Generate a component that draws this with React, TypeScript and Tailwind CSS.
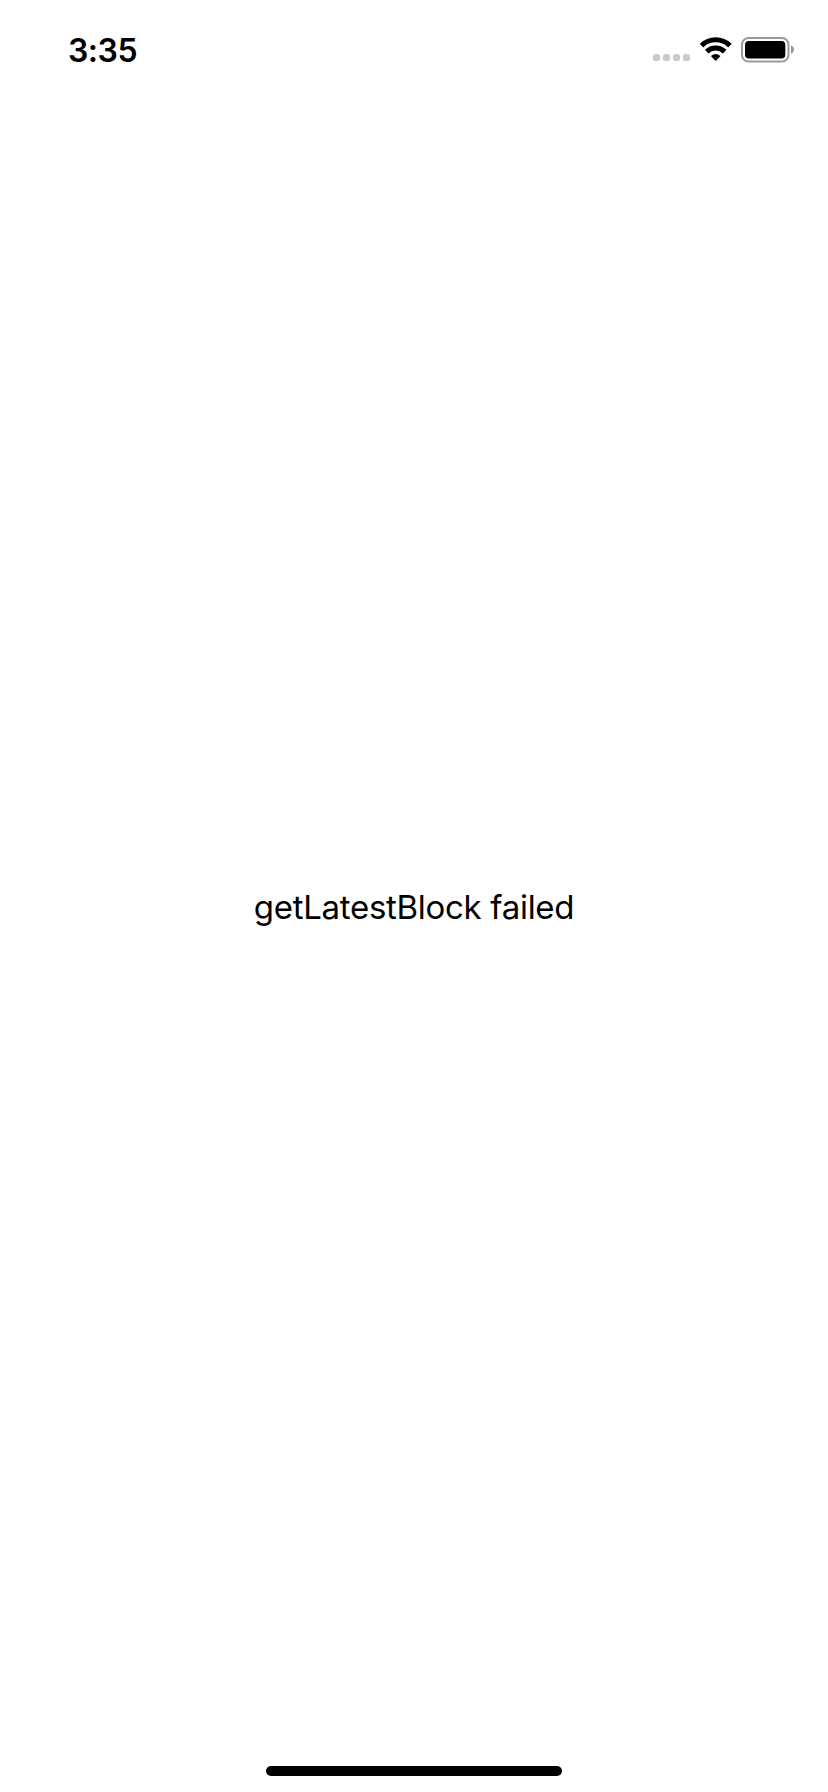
function StatusIcons() {
  return (
    <svg width="142" height="26" viewBox="652 37 142 26" aria-hidden="true">
      <g fill="#cacaca">
        <rect x="653" y="54" width="7" height="7" rx="2.6" />
        <rect x="663" y="54" width="7" height="7" rx="2.6" />
        <rect x="673" y="54" width="7" height="7" rx="2.6" />
        <rect x="683" y="54" width="7" height="7" rx="2.6" />
      </g>
      <g fill="none" stroke="#000" strokeWidth="5">
        <path d="M701.5 45.6 A20.2 20.2 0 0 1 729.9 45.6" />
        <path d="M706.7 51.6 A13 13 0 0 1 724.7 51.6" />
      </g>
      <path d="M710.9 56 Q715.7 52.2 720.5 56 L716.2 60.6 Q715.7 61.1 715.2 60.6Z" />
      <rect x="742" y="38" width="46.5" height="23.5" rx="6.5" fill="none" stroke="#999" strokeWidth="2" />
      <rect x="745" y="41" width="40.3" height="17.5" rx="3.8" />
      <path d="M791 45.3 Q794 46.6 794 49.5 T791 53.7Z" fill="#999" />
    </svg>
  );
}

export default function App() {
  return (
    <div className="flex h-[1792px] w-[828px] flex-col bg-white font-['Inter','Liberation_Sans',sans-serif] text-black">
      <header className="flex h-[88px] shrink-0 items-start justify-between pt-[37px] pr-[34px] pl-[68px]">
        <time className="pt-px text-[32px] leading-[26px] font-semibold tracking-[-0.5px]">3:35</time>
        <StatusIcons />
      </header>
      <main className="flex flex-1 items-center justify-center pt-0.5">
        <p className="text-[33px] leading-[40px] tracking-[-0.3px]">getLatestBlock failed</p>
      </main>
      <footer className="flex h-[68px] shrink-0 items-end justify-center pb-4">
        <div className="h-2.5 w-[296px] rounded-full bg-black" />
      </footer>
    </div>
  );
}
